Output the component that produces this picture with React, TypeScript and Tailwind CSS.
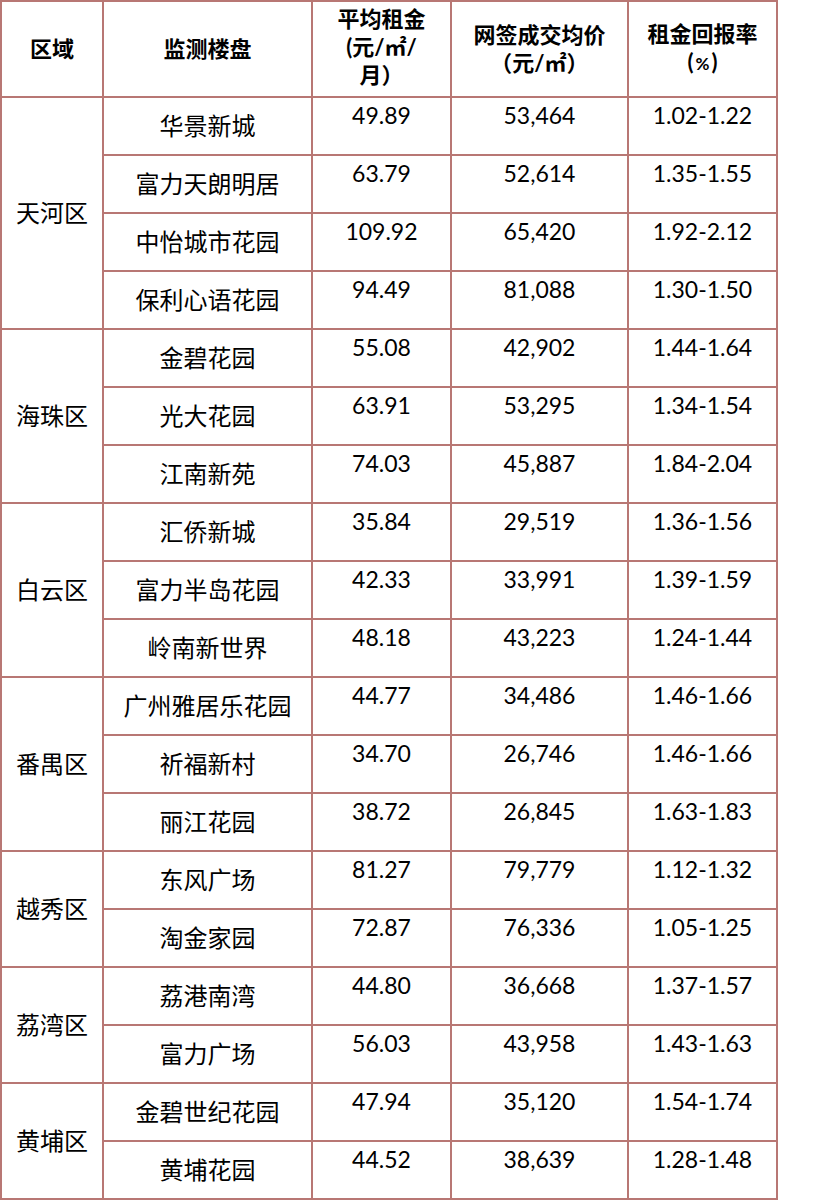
import React from 'react';

type Row = { name: string; rent: string; price: string; yieldRate: string };
type District = { name: string; rows: Row[] };

const DATA: District[] = [
  {
    name: '天河区',
    rows: [
      { name: '华景新城', rent: '49.89', price: '53,464', yieldRate: '1.02-1.22' },
      { name: '富力天朗明居', rent: '63.79', price: '52,614', yieldRate: '1.35-1.55' },
      { name: '中怡城市花园', rent: '109.92', price: '65,420', yieldRate: '1.92-2.12' },
      { name: '保利心语花园', rent: '94.49', price: '81,088', yieldRate: '1.30-1.50' },
    ],
  },
  {
    name: '海珠区',
    rows: [
      { name: '金碧花园', rent: '55.08', price: '42,902', yieldRate: '1.44-1.64' },
      { name: '光大花园', rent: '63.91', price: '53,295', yieldRate: '1.34-1.54' },
      { name: '江南新苑', rent: '74.03', price: '45,887', yieldRate: '1.84-2.04' },
    ],
  },
  {
    name: '白云区',
    rows: [
      { name: '汇侨新城', rent: '35.84', price: '29,519', yieldRate: '1.36-1.56' },
      { name: '富力半岛花园', rent: '42.33', price: '33,991', yieldRate: '1.39-1.59' },
      { name: '岭南新世界', rent: '48.18', price: '43,223', yieldRate: '1.24-1.44' },
    ],
  },
  {
    name: '番禺区',
    rows: [
      { name: '广州雅居乐花园', rent: '44.77', price: '34,486', yieldRate: '1.46-1.66' },
      { name: '祈福新村', rent: '34.70', price: '26,746', yieldRate: '1.46-1.66' },
      { name: '丽江花园', rent: '38.72', price: '26,845', yieldRate: '1.63-1.83' },
    ],
  },
  {
    name: '越秀区',
    rows: [
      { name: '东风广场', rent: '81.27', price: '79,779', yieldRate: '1.12-1.32' },
      { name: '淘金家园', rent: '72.87', price: '76,336', yieldRate: '1.05-1.25' },
    ],
  },
  {
    name: '荔湾区',
    rows: [
      { name: '荔港南湾', rent: '44.80', price: '36,668', yieldRate: '1.37-1.57' },
      { name: '富力广场', rent: '56.03', price: '43,958', yieldRate: '1.43-1.63' },
    ],
  },
  {
    name: '黄埔区',
    rows: [
      { name: '金碧世纪花园', rent: '47.94', price: '35,120', yieldRate: '1.54-1.74' },
      { name: '黄埔花园', rent: '44.52', price: '38,639', yieldRate: '1.28-1.48' },
    ],
  },
];

const FONT = "font-['Lato','Noto_Sans_CJK_SC',sans-serif]";

function HeadCell({ children }: { children: React.ReactNode }) {
  return (
    <div className="bg-white flex items-center justify-center text-center font-bold text-[22px] leading-[28px] text-black">
      <div>{children}</div>
    </div>
  );
}

function NumCell({ value }: { value: string }) {
  return (
    <div className="bg-white flex justify-center pt-[3px] text-[23px] leading-[28px] text-black">
      {value}
    </div>
  );
}

export default function App() {
  let rowIndex = 2;
  return (
    <div className={`min-h-screen bg-white ${FONT}`}>
      <div className="w-[778px] bg-[#b87774] p-[2px] grid grid-cols-[100px_207px_137px_175px_147px] grid-rows-[94px_repeat(19,56px)] gap-[2px]">
        <HeadCell>区域</HeadCell>
        <HeadCell>监测楼盘</HeadCell>
        <HeadCell>
          <span className="relative top-[-2px]">
            平均租金
            <br />
            (元/㎡/
            <br />
            月）
          </span>
        </HeadCell>
        <HeadCell>
          网签成交均价
          <br />
          （元/㎡）
        </HeadCell>
        <HeadCell>
          租金回报率
          <br />
          (<span className="text-[17px] px-[2px]">%</span>)
        </HeadCell>

        {DATA.map((d) => {
          const start = rowIndex;
          rowIndex += d.rows.length;
          return (
            <React.Fragment key={d.name}>
              <div
                className="bg-white flex items-center justify-center text-[24px] text-black col-start-1"
                style={{ gridRow: `${start} / span ${d.rows.length}` }}
              >
                {d.name}
              </div>
              {d.rows.map((r, i) => (
                <React.Fragment key={r.name}>
                  <div
                    className="bg-white flex items-center justify-center text-[24px] text-black col-start-2"
                    style={{ gridRow: `${start + i}` }}
                  >
                    {r.name}
                  </div>
                  <NumCell value={r.rent} />
                  <NumCell value={r.price} />
                  <NumCell value={r.yieldRate} />
                </React.Fragment>
              ))}
            </React.Fragment>
          );
        })}
      </div>
    </div>
  );
}
